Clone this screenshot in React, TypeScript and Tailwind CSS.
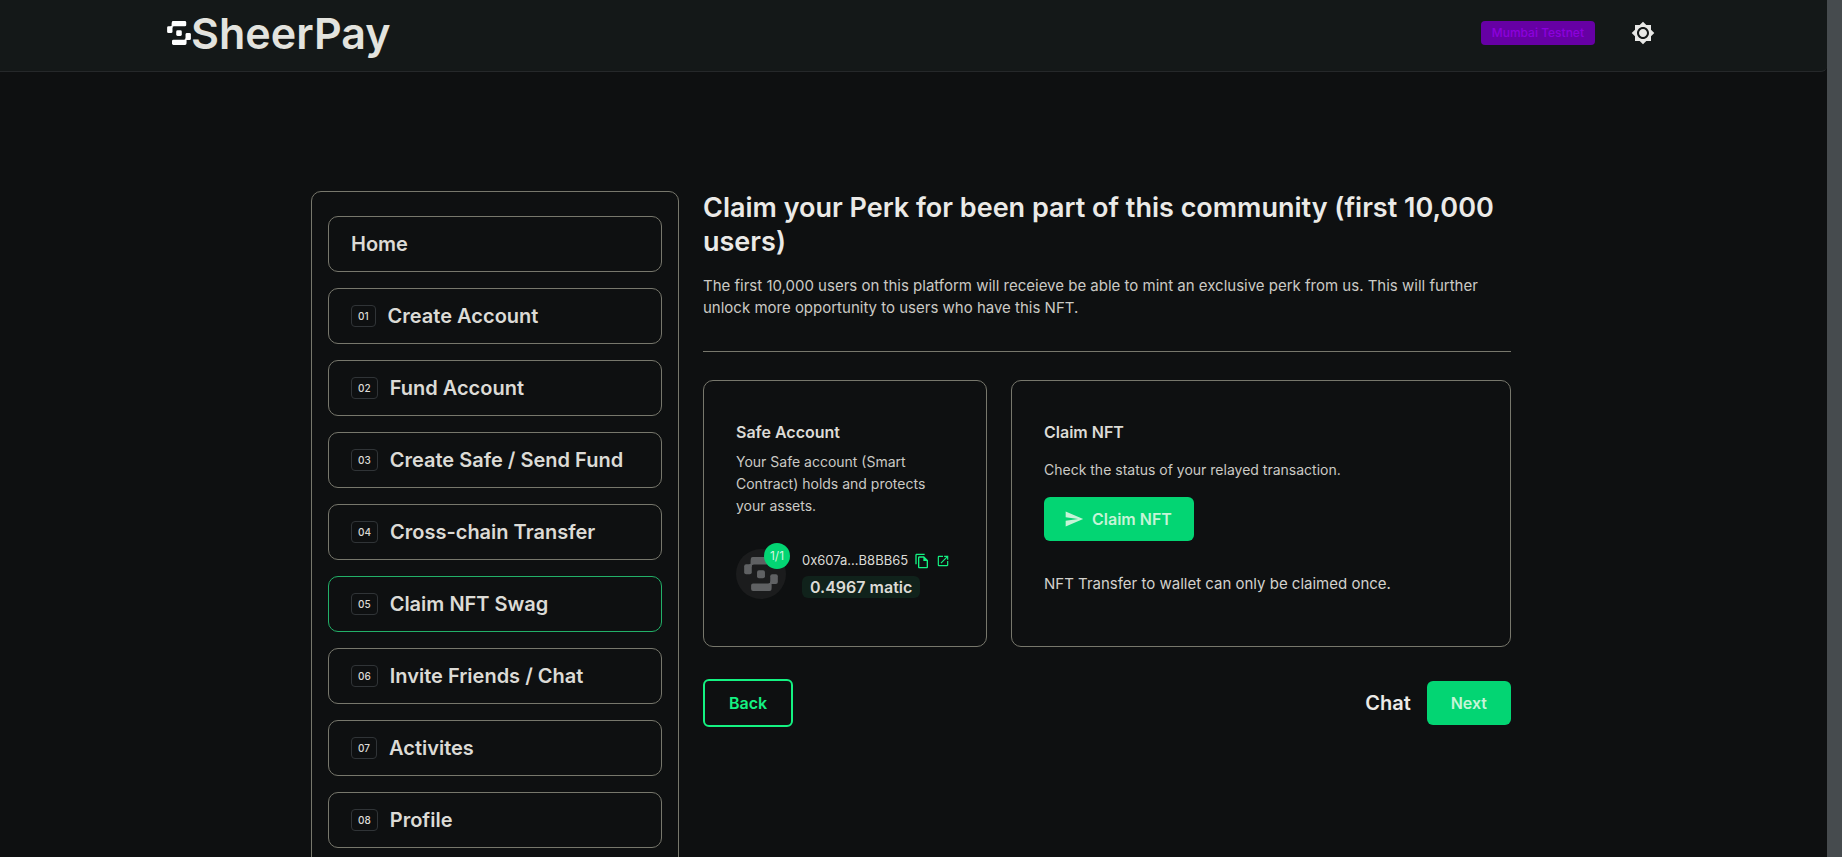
import { MdBrightness7, MdOpenInNew, MdOutlineFileCopy, MdSend } from "react-icons/md";

const steps = [
  { label: "Home" },
  { number: "01", label: "Create Account" },
  { number: "02", label: "Fund Account" },
  { number: "03", label: "Create Safe / Send Fund" },
  { number: "04", label: "Cross-chain Transfer" },
  { number: "05", label: "Claim NFT Swag", active: true },
  { number: "06", label: "Invite Friends / Chat" },
  { number: "07", label: "Activites" },
  { number: "08", label: "Profile" },
];

function Mark({ className }: { className: string }) {
  return (
    <svg viewBox="0 0 102 103" className={className} fill="currentColor" aria-hidden="true">
      <rect x="20" y="0" width="62" height="23" rx="6" />
      <rect x="0" y="22" width="23" height="30" rx="6" />
      <path d="M20 10h8v13q-5 0-5 6h-8v-6q5 0 5-6z" />
      <rect x="39" y="40" width="24" height="24" rx="6" />
      <rect x="79" y="52" width="23" height="30" rx="6" />
      <rect x="21" y="80" width="62" height="23" rx="6" />
      <path d="M82 93h-8v-13q5 0 5-6h8v6q-5 0-5 6z" />
    </svg>
  );
}

function Header() {
  return (
    <header className="h-[72px] rounded-br-md border-b border-[#25282a] bg-[#141818] pr-[5px]">
      <div className="mx-auto flex h-full max-w-[1536px] items-center justify-between px-6 pb-[5px]">
        <a href="#home" className="flex items-center">
          <Mark className="size-6 text-white" />
          <span className="text-[43px] leading-[64px] font-semibold text-[#e3e3de]">SheerPay</span>
        </a>
        <div className="-mr-2 flex items-center gap-7">
          <span className="flex h-6 items-center rounded-[4px] bg-[#6600a4] px-[11px] text-xs font-medium text-[#8c00dc]">
            Mumbai Testnet
          </span>
          <button type="button" aria-label="Toggle theme" className="p-2 text-[#e8e8e6]">
            <MdBrightness7 size={24} />
          </button>
        </div>
      </div>
    </header>
  );
}

function Sidebar() {
  return (
    <nav aria-label="Steps" className="w-[368px] shrink-0 rounded-[10px] border border-[#77776c] px-4 py-6">
      <ul className="flex flex-col gap-4">
        {steps.map((step) => (
          <li key={step.label}>
            <a
              href="#step"
              aria-current={step.active ? "step" : undefined}
              className={
                step.active
                  ? "flex h-14 items-center gap-3 rounded-[10px] border border-[#22b068] px-[22px]"
                  : "flex h-14 items-center gap-3 rounded-[10px] border border-[#77776c] px-[22px]"
              }
            >
              {step.number && (
                <span className="flex h-[22px] items-center rounded-[4px] border border-[#303437] px-[6px] text-[10px] font-medium text-[#dcdbd6]">
                  {step.number}
                </span>
              )}
              <span className="text-xl font-semibold text-[#dcdbd6]">{step.label}</span>
            </a>
          </li>
        ))}
      </ul>
    </nav>
  );
}

function SafeCard() {
  return (
    <section className="w-[284px] shrink-0 rounded-[10px] border border-[#77776c] px-8 pt-10 pb-[47px]">
      <h2 className="text-base leading-[22px] font-semibold text-[#dcdbd6]">Safe Account</h2>
      <p className="mt-2 text-sm leading-[22px] text-[#cbcac5]">
        Your Safe account (Smart Contract) holds and protects your assets.
      </p>
      <div className="mt-8 flex items-center gap-4">
        <div className="relative flex size-[50px] shrink-0 items-center justify-center rounded-full bg-[#1b1c1d]">
          <Mark className="size-[34px] text-[#5f6163]" />
          <span className="absolute -top-[6px] -right-1 flex size-[26px] items-center justify-center rounded-full bg-[#03d573] text-xs text-[#d5f5e0]">
            1/1
          </span>
        </div>
        <div>
          <div className="flex h-[22px] items-center text-[13px] whitespace-nowrap text-[#dcdbd6]">
            0x607a...B8BB65
            <button type="button" aria-label="Copy address" className="ml-[6px] text-[#14f282]">
              <MdOutlineFileCopy size={16} />
            </button>
            <a href="#explorer" aria-label="Open in explorer" className="ml-[6px] text-[#14f282]">
              <MdOpenInNew size={14} />
            </a>
          </div>
          <span className="mt-1 inline-flex h-[22px] items-center rounded-md bg-[#10221b] px-2 text-base font-semibold text-[#dcdbd6]">
            0.4967 matic
          </span>
        </div>
      </div>
    </section>
  );
}

function ClaimCard() {
  return (
    <section className="grow rounded-[10px] border border-[#77776c] px-8 pt-10 pb-11">
      <h2 className="text-base leading-[22px] font-semibold text-[#dcdbd6]">Claim NFT</h2>
      <p className="mt-4 text-sm leading-[22px] text-[#cbcac5]">Check the status of your relayed transaction.</p>
      <button
        type="button"
        className="mt-4 flex h-11 items-center gap-2 rounded-md bg-[#03d573] pr-[22px] pl-5 text-base font-semibold text-[#c6f4d7]"
      >
        <MdSend size={20} />
        Claim NFT
      </button>
      <p className="mt-8 text-[15px] leading-[22px] text-[#d3d2cd]">NFT Transfer to wallet can only be claimed once.</p>
    </section>
  );
}

export default function App() {
  return (
    <div className="flex h-screen bg-[#0e1011] font-['Inter',sans-serif]">
      <div className="min-w-0 grow overflow-x-hidden overflow-y-auto [scrollbar-width:none]">
        <Header />
        <div className="pr-[5px]">
          <main className="mx-auto flex max-w-[1200px] items-start gap-6 pt-[119px] pb-16">
            <Sidebar />
            <div className="min-w-0 grow">
              <h1 className="text-[27px] leading-[34px] font-semibold text-[#ebeae7]">
                Claim your Perk for been part of this community (first 10,000 users)
              </h1>
              <p className="mt-4 text-[15px] leading-[22px] text-[#cbcac5]">
                The first 10,000 users on this platform will receieve be able to mint an exclusive perk from us. This
                will further unlock more opportunity to users who have this NFT.
              </p>
              <hr className="mt-8 border-[#77776c]" />
              <div className="mt-7 flex items-stretch gap-6">
                <SafeCard />
                <ClaimCard />
              </div>
              <div className="mt-8 flex items-center justify-between">
                <button
                  type="button"
                  className="h-12 rounded-md border-2 border-[#14f282] px-6 text-base font-semibold text-[#14f282]"
                >
                  Back
                </button>
                <div className="flex items-center gap-4">
                  <a href="#chat" className="text-xl font-semibold text-[#ebeae7]">
                    Chat
                  </a>
                  <button
                    type="button"
                    className="h-11 rounded-md bg-[#03d573] px-6 text-base font-semibold text-[#c6f4d7]"
                  >
                    Next
                  </button>
                </div>
              </div>
            </div>
          </main>
        </div>
      </div>
      <div className="w-[15px] shrink-0 bg-[#464b4e]" />
    </div>
  );
}
